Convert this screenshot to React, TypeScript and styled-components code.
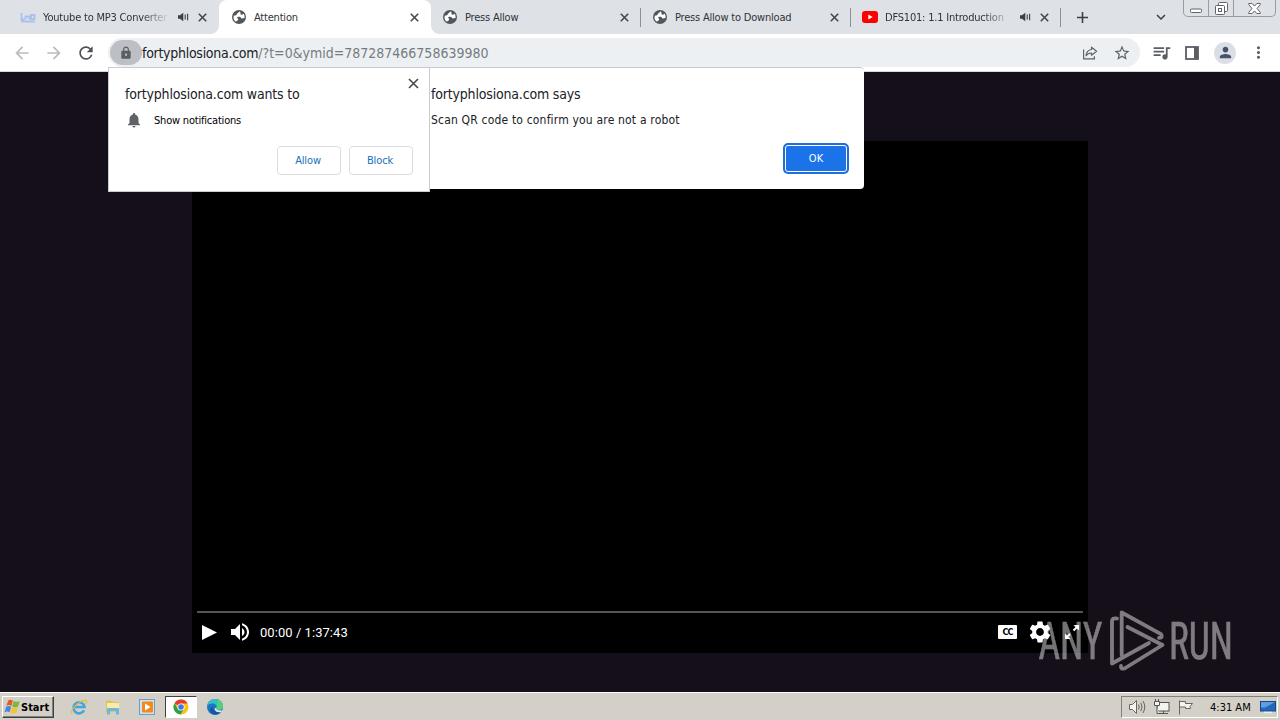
import { ReactNode } from "react";
import styled, { createGlobalStyle, css } from "styled-components";
import {
  MdAdd,
  MdArrowBack,
  MdArrowForward,
  MdKeyboardArrowDown,
  MdLock,
  MdMoreVert,
  MdNotifications,
  MdPerson,
  MdQueueMusic,
  MdRefresh,
  MdSettings,
  MdStarBorder,
  MdVolumeUp,
} from "react-icons/md";

const GlobalStyle = createGlobalStyle`
  * {
    box-sizing: border-box;
  }

  body {
    margin: 0;
    overflow: hidden;
    font-family: "DejaVu Sans Condensed", "DejaVu Sans", sans-serif;
    font-stretch: condensed;
    font-size: 11px;
    color: #202124;
  }

  svg {
    display: block;
    flex: none;
  }

  button {
    font: inherit;
    border: 0;
    padding: 0;
    background: none;
    color: inherit;
  }
`;

type TabData = {
  title: string;
  icon: ReactNode;
  width: number;
  active?: boolean;
  audible?: boolean;
  divider?: boolean;
};

const ConverterLogo = () => (
  <svg width="16" height="12" viewBox="0 0 16 12" fill="none" stroke="#a9c1ec">
    <path d="M1.500 2v6.500h3M5.500 8.500V5.500h4v3M11 4h3.500v4H11zM1 10.500h14" strokeWidth="1.800" />
  </svg>
);

const YoutubeLogo = () => (
  <svg width="16" height="12" viewBox="0 0 16 12">
    <rect width="16" height="12" rx="3" fill="#f00" />
    <path d="M6.3 3.4v5.2L10.7 6z" fill="#fff" />
  </svg>
);

const GlobeIcon = () => (
  <svg width="14" height="14" viewBox="0 0 14 14">
    <circle cx="7" cy="7" r="7" fill="#53575c" />
    <path
      d="M7.800 1.600C6.500 1.900 6.800 3 5.600 3.300c-1 .3-.6 1.500-1.600 1.900-.6.300-1.300.2-2.200.5-.9 2.500.2 4.900 2.200 6 .3-1.200 2.100-1.100 2.200-2.300.1-.9-1.200-1-1-2 .2-1 1.900-.6 2.900-.4.9.200.8 1.300 1.700 1.400.9.100 1.500-.5 2.700-.4.300-1.900-.2-3.300-1-4.200-.6.800-1.600 1.200-2.700.8-.9-.4.500-1.500-1-3z"
      fill="#fff"
    />
  </svg>
);

const tabs: TabData[] = [
  { title: "Youtube to MP3 Converter", icon: <ConverterLogo />, width: 219, audible: true },
  { title: "Attention", icon: <GlobeIcon />, width: 212, active: true },
  { title: "Press Allow", icon: <GlobeIcon />, width: 210, divider: true },
  { title: "Press Allow to Download", icon: <GlobeIcon />, width: 210, divider: true },
  {
    title: "DFS101: 1.1 Introduction",
    icon: <YoutubeLogo />,
    width: 210,
    audible: true,
    divider: true,
  },
];

const SpeakerIcon = () => (
  <svg width="11" height="10" viewBox="0 0 11 10" fill="#3c4043">
    <path d="M0 3.3h2L5.3.8v8.4L2 6.7H0z" />
    <path d="M7.2 2.600v4.800M9.600 1.800v6.400" stroke="#3c4043" strokeWidth="1.1" />
  </svg>
);

const CloseIcon = ({ size = 9, weight = 1.6 }: { size?: number; weight?: number }) => (
  <svg width={size} height={size} viewBox="0 0 9 9" stroke="#45494e" strokeWidth={weight}>
    <path d="M.8.8l7.4 7.4M8.2.8L.8 8.2" />
  </svg>
);

const WindowControls = () => (
  <Controls>
    <ControlButton $width={24}>
      <svg width="13" height="6" viewBox="0 0 13 6" fill="#fff" stroke="#5f6368">
        <rect x=".5" y="1" width="11" height="3.5" rx="1" />
      </svg>
    </ControlButton>
    <ControlButton $width={25}>
      <svg width="13" height="13" viewBox="0 0 13 13" fill="#fff" stroke="#5f6368">
        <rect x="3.5" y=".5" width="9" height="9" rx="1" />
        <rect x=".5" y="3.5" width="9" height="9" rx="1" />
        <rect x="3.5" y="6.5" width="3" height="3" />
      </svg>
    </ControlButton>
    <ControlButton $width={42}>
      <svg width="13" height="11" viewBox="0 0 13 11" fill="#fff" stroke="#5f6368">
        <path d="M.7.5h3.5l2.300 2.600L8.800.5h3.500v1L9 5.500l3.300 4v1H8.800L6.500 7.900l-2.300 2.600H.7v-1L4 5.500.7 1.500z" />
      </svg>
    </ControlButton>
  </Controls>
);

const ShareIcon = () => (
  <svg width="16" height="16" viewBox="0 0 16 16" fill="none" stroke="#5f6368" strokeWidth="1.2">
    <path d="M1.600 4.500v9.400h10.800v-2.600" />
    <path
      d="M9.500 2.200L14.600 6.300 9.500 10.200V8C7 8 5.200 8.800 4 10.800 4.400 7.200 6.300 4.900 9.500 4.500z"
      strokeLinejoin="round"
    />
  </svg>
);

const SidePanelIcon = () => (
  <svg width="14" height="14" viewBox="0 0 14 14">
    <rect x="1" y="1" width="12" height="12" fill="none" stroke="#5a5d62" strokeWidth="1.800" />
    <path d="M9 1h4v12H9z" fill="#5a5d62" />
  </svg>
);

const PlayIcon = () => (
  <svg width="15" height="15" viewBox="0 0 15 15" fill="#fff">
    <path d="M0 0l15 7.500L0 15z" />
  </svg>
);

const FullscreenIcon = () => (
  <svg width="16" height="16" viewBox="0 0 16 16" fill="#fff" stroke="#fff" strokeWidth="2">
    <path d="M9.500 6.500L13 3M6 10l-3 3" />
    <path d="M9.500 1h5.500v5.500zM1 9.500V15h5.500z" stroke="none" />
  </svg>
);

const Watermark = () => (
  <WatermarkSvg width="196" height="66" viewBox="0 0 196 66">
    <g
      fill="#fff"
      stroke="#fff"
      strokeWidth=".6"
      fontFamily="Roboto, sans-serif"
      fontSize="52"
    >
      <text x=".5" y="51" textLength="64" lengthAdjust="spacingAndGlyphs">
        ANY
      </text>
      <text x="131" y="51" textLength="64" lengthAdjust="spacingAndGlyphs">
        RUN
      </text>
    </g>
    <g fill="none" stroke="#fff" strokeWidth="3.800" strokeLinecap="round" strokeLinejoin="round">
      <path d="M83.700 47V4.500L123 26.200q2.500 3.300-2 3.600" />
      <path d="M89.500 19L124.500 37 86.500 60.500q-4 1-3.500-2.500" />
      <path d="M79 10.500q-5-1-5 3V55.500L111 35" />
    </g>
  </WatermarkSvg>
);

const StartFlag = () => (
  <svg width="17" height="16" viewBox="0 0 17 16">
    <path d="M4.200 1.500c2-1.300 3.300-1 4.700 0L7.400 6.900c-1.500-1-3-1.200-5-.2z" fill="#e8582a" />
    <path d="M9.700 2.100c1.600 1 3.500 1 6-.2l-1.600 5.600c-2 1.200-4 1.100-6 .1z" fill="#7cb83a" />
    <path d="M2.100 7.700c2-1.100 3.500-.9 5 .1l-1.500 5.400c-1.500-1-3-1.100-5 0z" fill="#3f8ae0" />
    <path d="M7.900 8.500c1.700 1 3.600 1 6-.1L12.400 13.800c-2 1.100-4 1-6 0z" fill="#f6c231" />
  </svg>
);

const ExplorerIcon = () => (
  <svg width="18" height="18" viewBox="0 0 18 18" fill="none">
    <path d="M14 12.300A5.500 5.500 0 1 1 14.500 9H5" stroke="#43a6e0" strokeWidth="2.600" />
    <path d="M2 15.500C-.5 12 11 1 16 2.500c1 .4.700 2 0 3.300" stroke="#e9b93c" strokeWidth="1.300" />
  </svg>
);

const FolderIcon = () => (
  <svg width="18" height="18" viewBox="0 0 18 18">
    <path d="M2 2.500h5l1 1.500h7V14H2z" fill="#dfc25c" />
    <path d="M3 5h12v5H3z" fill="#f8ecab" />
    <path
      d="M3 16.500v-5q0-1.500 1.500-1.500h9q1.500 0 1.500 1.500v5h-3v-3.500H6v3.500z"
      fill="#6fb6df"
    />
  </svg>
);

const MediaPlayerIcon = () => (
  <svg width="18" height="18" viewBox="0 0 18 18">
    <rect x="1.500" y="1.500" width="15" height="15" fill="#cfe2f1" stroke="#6f9cc4" />
    <rect x="4" y="3.500" width="11" height="11" rx="1" fill="#f08a1c" />
    <path d="M7 5.500v7L12.500 9z" fill="#fff" />
  </svg>
);

const ChromeIcon = () => (
  <svg width="16" height="16" viewBox="0 0 16 16">
    <circle cx="8" cy="8" r="7.500" fill="#fbc116" />
    <path d="M8 8L1.500 4.200A7.500 7.500 0 0 1 14.700 4.600H8z" fill="#e33b2e" />
    <path d="M8 8L4.900 9.900 1.500 4.200A7.500 7.500 0 0 0 7.500 15.500L10.900 9.900z" fill="#2da04f" />
    <circle cx="8" cy="8" r="3.600" fill="#fff" />
    <circle cx="8" cy="8" r="2.800" fill="#3b78e7" />
  </svg>
);

const EdgeIcon = () => (
  <svg width="18" height="18" viewBox="0 0 18 18">
    <circle cx="9" cy="9" r="8" fill="#1b76c8" />
    <path
      d="M1.200 8C2 3.500 5.500 1 9.300 1 14 1 17 4.500 17 8c0 2.600-2 4-4.300 4-1.800 0-2.700-.8-2.200-1.600C11.800 8 9.500 5.500 6.500 5.500 4 5.500 2 6.500 1.200 8z"
      fill="#37bfc0"
    />
    <path
      d="M12 1.600c3.200 1.200 5 3.900 5 6.400 0 2.600-2 4-4.300 4-1.800 0-2.700-.8-2.200-1.600z"
      fill="#57cf75"
    />
    <path d="M7 8.500c-1.200 3.500 2.500 6.500 8.500 4.500-2.500 4-8 4.500-10.500 1.500-1.500-2-.8-5 2-6z" fill="#15549f" />
    <path d="M10.300 9.500c-.5 2 1 3 3 3h3l-1 1.500c-4 .8-6.800-1-6.500-3.500z" fill="#e4eef4" />
  </svg>
);

const TrayIcons = () => (
  <>
    <svg width="18" height="16" viewBox="0 0 18 16" fill="#f3f3f0" stroke="#666">
      <path d="M1.500 5.500h3l4-4v13l-4-4h-3z" />
      <path d="M10.500 5.500q1.500 2.500 0 5M12.800 3.800q2.500 4.200 0 8.400M15 2q3.500 6 0 12" fill="none" />
    </svg>
    <svg width="17" height="16" viewBox="0 0 17 16" fill="#f3f3f0" stroke="#555">
      <rect x="4.500" y="3.500" width="11.500" height="8.500" />
      <path d="M6 14.500h9M10.500 12v2.500M1.500 2.500h5v4h-5zM2.500 0v2M5.500 0v2M4 6.500v8h2" />
    </svg>
    <svg width="17" height="16" viewBox="0 0 17 16" fill="#f3f3f0" stroke="#666">
      <path d="M2.500 15.500V1.500M2.500 2.500h6v2h7l-2.500 3 .5 2h-5v-1.500h-6" />
    </svg>
  </>
);

const DesktopIcon = () => (
  <svg width="16" height="14" viewBox="0 0 16 14">
    <rect x=".5" y="1.500" width="15" height="9.500" fill="#2468bd" stroke="#164784" />
    <path d="M1 2h14L5 7.500H1z" fill="#5f9ee2" />
    <path d="M4 12.500h8" stroke="#e8eef5" strokeWidth="1.500" />
  </svg>
);

const App = () => (
  <Screen>
    <GlobalStyle />
    <TabStrip>
      {tabs.map(({ title, icon, width, active, audible, divider }) => (
        <Tab key={title} $width={width} $active={active} $divider={divider}>
          <TabIcon>{icon}</TabIcon>
          <TabTitle $faded={audible}>{title}</TabTitle>
          {audible && <SpeakerIcon />}
          <TabClose>
            <CloseIcon />
          </TabClose>
        </Tab>
      ))}
      <NewTab>
        <MdAdd size={19} />
      </NewTab>
      <TabSearch>
        <MdKeyboardArrowDown size={18} />
      </TabSearch>
      <WindowControls />
    </TabStrip>

    <Toolbar>
      <Navigation>
        <MdArrowBack size={20} color="#babcbe" />
        <MdArrowForward size={20} color="#babcbe" />
        <MdRefresh size={20} />
      </Navigation>
      <AddressBar>
        <SiteInfo>
          <MdLock size={14} />
        </SiteInfo>
        <Domain>fortyphlosiona.com</Domain>
        <Query>/?t=0&amp;ymid=787287466758639980</Query>
        <AddressActions>
          <ShareIcon />
          <MdStarBorder size={18} />
        </AddressActions>
      </AddressBar>
      <Actions>
        <MdQueueMusic size={21} />
        <SidePanelIcon />
        <Avatar>
          <MdPerson size={17} />
        </Avatar>
        <MdMoreVert size={19} />
      </Actions>
    </Toolbar>

    <Page>
      <Player>
        <Progress />
        <PlayerControls>
          <PlayIcon />
          <MdVolumeUp size={24} />
          <Time>00:00 / 1:37:43</Time>
          <CaptionsBadge>CC</CaptionsBadge>
          <MdSettings size={26} />
          <FullscreenIcon />
        </PlayerControls>
      </Player>
      <Watermark />
    </Page>

    <Taskbar>
      <StartButton>
        <StartFlag />
        Start
      </StartButton>
      <QuickLaunch>
        <TaskItem>
          <ExplorerIcon />
        </TaskItem>
        <TaskItem>
          <FolderIcon />
        </TaskItem>
        <TaskItem>
          <MediaPlayerIcon />
        </TaskItem>
        <TaskItem $pressed>
          <ChromeIcon />
        </TaskItem>
        <TaskItem>
          <EdgeIcon />
        </TaskItem>
      </QuickLaunch>
      <Tray>
        <TrayIcons />
        <Clock>4:31 AM</Clock>
        <DesktopIcon />
      </Tray>
    </Taskbar>

    <AlertDialog>
      <DialogTitle>fortyphlosiona.com says</DialogTitle>
      <AlertMessage>Scan QR code to confirm you are not a robot</AlertMessage>
      <OkButton>OK</OkButton>
    </AlertDialog>

    <PermissionPopup>
      <PopupClose>
        <CloseIcon size={11} weight={1.3} />
      </PopupClose>
      <DialogTitle>fortyphlosiona.com wants to</DialogTitle>
      <Permission>
        <MdNotifications size={18} color="#5f6368" />
        Show notifications
      </Permission>
      <PopupActions>
        <PopupButton>Allow</PopupButton>
        <PopupButton>Block</PopupButton>
      </PopupActions>
    </PermissionPopup>
  </Screen>
);

const Screen = styled.div`
  position: relative;
  display: flex;
  flex-direction: column;
  width: 1280px;
  height: 720px;
  overflow: hidden;
`;

const TabStrip = styled.div`
  display: flex;
  height: 34px;
  background: #dee1e6;
`;

const flare = css`
  content: "";
  position: absolute;
  bottom: 0;
  width: 8px;
  height: 8px;
`;

const Tab = styled.div<{ $width: number; $active?: boolean; $divider?: boolean }>`
  position: relative;
  display: flex;
  align-items: center;
  width: ${({ $width }) => $width}px;
  padding: 0 12px 0 ${({ $width }) => ($width === 219 ? 20 : 11)}px;

  ${({ $active }) =>
    $active &&
    css`
      padding-left: 12px;
      background: #fff;
      border-radius: 8px 8px 0 0;

      &::before {
        ${flare}
        left: -8px;
        background: radial-gradient(circle at 0 0, transparent 7.5px, #fff 8px);
      }

      &::after {
        ${flare}
        right: -8px;
        background: radial-gradient(circle at 100% 0, transparent 7.5px, #fff 8px);
      }
    `}

  ${({ $divider }) =>
    $divider &&
    css`
      &::after {
        content: "";
        position: absolute;
        right: 0;
        top: 8px;
        width: 1px;
        height: 19px;
        background: #8c9096;
      }
    `}
`;

const TabIcon = styled.span`
  display: flex;
  justify-content: center;
  width: 16px;
  margin-right: 7px;
`;

const TabTitle = styled.span<{ $faded?: boolean }>`
  flex: ${({ $faded }) => ($faded ? "0 0 127px" : "1")};
  margin-right: ${({ $faded }) => ($faded ? 8 : 0)}px;
  white-space: nowrap;
  letter-spacing: -0.2px;
  color: #303338;
  mask-image: ${({ $faded }) =>
    $faded ? "linear-gradient(to right, #000 98px, transparent)" : "none"};
`;

const TabClose = styled.button`
  display: flex;
  margin: 0 0 0 auto;
`;

const NewTab = styled.button`
  display: flex;
  align-items: center;
  width: 19px;
  margin-left: 12px;
  color: #3c4043;
`;

const TabSearch = styled(NewTab)`
  margin: 0 12px 0 auto;
`;

const Controls = styled.div`
  display: flex;
  height: 17px;
  margin-right: 4px;
  border: 1px solid #9a9ca1;
  border-top: 0;
  border-radius: 0 0 5px 5px;
`;

const ControlButton = styled.button<{ $width: number }>`
  display: flex;
  align-items: center;
  justify-content: center;
  width: ${({ $width }) => $width}px;

  & + & {
    border-left: 1px solid #9a9ca1;
  }

  &:first-child {
    padding-top: 5px;
  }
`;

const Toolbar = styled.div`
  display: flex;
  align-items: center;
  height: 38px;
  padding: 0 12px;
  background: #fff;
  border-bottom: 1px solid #d5d7da;
  color: #5f6368;
`;

const Navigation = styled.div`
  display: flex;
  gap: 12px;
  width: 96px;

  svg:last-child {
    color: #4d5156;
  }
`;

const AddressBar = styled.div`
  display: flex;
  align-items: center;
  width: 1032px;
  height: 29px;
  padding: 0 9px 0 2px;
  border-radius: 15px;
  background: #edf0f3;
  font-size: 14px;
`;

const SiteInfo = styled.span`
  display: flex;
  align-items: center;
  justify-content: center;
  width: 32px;
  height: 25px;
  border-radius: 13px;
  background: #bcbfc3;
  color: #5a5d61;
`;

const Domain = styled.span`
  letter-spacing: -0.28px;
  color: #202124;
`;

const Query = styled.span`
  color: #777b80;
`;

const AddressActions = styled.div`
  display: flex;
  gap: 15px;
  align-items: center;
  margin-left: auto;
`;

const Actions = styled.div`
  display: flex;
  flex: 1;
  align-items: center;
  justify-content: space-between;
  padding-left: 11px;
  color: #5a5d62;
`;

const Avatar = styled.div`
  display: flex;
  align-items: center;
  justify-content: center;
  width: 22px;
  height: 22px;
  margin-left: 2px;
  border-radius: 50%;
  background: #dadee5;
  color: #46516c;
`;

const Page = styled.main`
  position: relative;
  flex: 1;
  padding: 69px 192px 0;
  background: #150f1a;
`;

const Player = styled.div`
  display: flex;
  flex-direction: column;
  justify-content: flex-end;
  height: 512px;
  padding: 0 5px;
  background: #000;
`;

const Progress = styled.div`
  height: 2px;
  background: #555;
`;

const PlayerControls = styled.div`
  display: flex;
  align-items: center;
  height: 40px;
  padding: 0 3px 2px 5px;
  color: #fff;

  svg:nth-child(2) {
    margin-left: 11px;
  }

  svg:last-child {
    margin-left: 11px;
  }
`;

const Time = styled.span`
  margin: 0 auto 0 8px;
  font: 13px Roboto, sans-serif;
  letter-spacing: 0.05px;
`;

const CaptionsBadge = styled.span`
  display: flex;
  align-items: center;
  justify-content: center;
  width: 19px;
  height: 14px;
  margin-right: 10px;
  border-radius: 1px;
  background: #fff;
  color: #000;
  font: bold 9px "DejaVu Sans Condensed", sans-serif;
  letter-spacing: -1px;
`;

const WatermarkSvg = styled.svg`
  position: absolute;
  left: 1038px;
  top: 536px;
  opacity: 0.45;
`;

const Taskbar = styled.footer`
  display: flex;
  align-items: center;
  height: 28px;
  padding: 1px 2px 0;
  background: #d4d0c8;
  border-top: 1px solid #fff;
`;

const StartButton = styled.button`
  display: flex;
  align-items: center;
  width: 52px;
  height: 22px;
  padding-left: 1px;
  border: 1px solid;
  border-color: #fff #404040 #404040 #fff;
  box-shadow: inset -1px -1px #808080;
  color: #000;
  font-weight: bold;
`;

const QuickLaunch = styled.div`
  display: flex;
  margin-left: 9px;
  gap: 2px;
`;

const TaskItem = styled.span<{ $pressed?: boolean }>`
  display: flex;
  align-items: center;
  justify-content: center;
  width: 32px;
  height: 22px;

  ${({ $pressed }) =>
    $pressed &&
    css`
      border: 1px solid;
      border-color: #404040 #fff #fff #404040;
      background: #fff;
    `}
`;

const Tray = styled.div`
  display: flex;
  align-items: center;
  gap: 7px;
  width: 157px;
  height: 22px;
  margin-left: auto;
  padding-left: 6px;
  border: 1px solid;
  border-color: #808080 #fff #fff #808080;
`;

const Clock = styled.time`
  margin: 0 2px 0 9px;
  color: #000;
`;

const DialogTitle = styled.div`
  font-size: 14px;
  line-height: 18px;
  letter-spacing: -0.18px;
`;

const AlertDialog = styled.section`
  position: absolute;
  left: 416px;
  top: 67px;
  display: flex;
  flex-direction: column;
  width: 448px;
  height: 122px;
  padding: 17px 16px 17px 15px;
  border-top: 1px solid #c9cbce;
  border-radius: 0 4px 4px 4px;
  background: #fff;
`;

const AlertMessage = styled.p`
  margin: 9px 0 0;
  font-size: 12px;
  line-height: 16px;
  letter-spacing: 0.18px;
`;

const OkButton = styled.button`
  align-self: flex-end;
  width: 62px;
  height: 27px;
  margin: 17px 1px 0 0;
  border: 1px solid #fff;
  border-radius: 3px;
  background: #1a73e8;
  box-shadow: 0 0 0 2px #1f6fdb;
  color: #fff;
`;

const PermissionPopup = styled.section`
  position: absolute;
  left: 108px;
  top: 67px;
  width: 322px;
  height: 125px;
  padding: 17px 16px;
  border: 1px solid #c9cbce;
  background: #fff;
`;

const PopupClose = styled.button`
  position: absolute;
  right: 10px;
  top: 10px;
`;

const Permission = styled.div`
  display: flex;
  align-items: center;
  gap: 11px;
  height: 18px;
  margin-top: 8px;
  letter-spacing: -0.2px;
  color: #000;
`;

const PopupActions = styled.div`
  display: flex;
  justify-content: flex-end;
  gap: 8px;
  margin-top: 17px;
`;

const PopupButton = styled.button`
  width: 64px;
  height: 29px;
  padding-right: 2px;
  border: 1px solid #dadce0;
  border-radius: 4px;
  color: #1a6fb8;
  letter-spacing: -0.15px;
`;

export default App;
